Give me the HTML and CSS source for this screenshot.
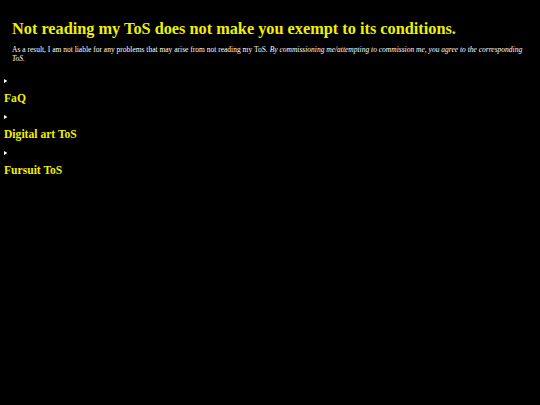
FILE: index.html
```html
<!DOCTYPE html>
<html>
<head>
<meta charset="utf-8">
<link rel="stylesheet" href="styles.css">
</head>
<body>
<div class="intro">
  <h2 class="title">Not reading my ToS does not make you exempt to its conditions.</h2>
  <p class="note">As a result, I am not liable for any problems that may arise from not reading my ToS. <em>By commissioning me/attempting to commission me, you agree to the corresponding ToS.</em></p>
</div>
<details class="section"><summary class="sum"><h3 class="head">FaQ</h3></summary></details>
<details class="section"><summary class="sum"><h3 class="head">Digital art ToS</h3></summary></details>
<details class="section"><summary class="sum"><h3 class="head">Fursuit ToS</h3></summary></details>
</body>
</html>
```

FILE: styles.css
```css
html, body { background: #000; }
body {
  margin: 4px;
  font-family: "Liberation Serif", "Times New Roman", serif;
  color: #fff;
}
.intro { padding: 8px 8px 0 8px; }
.title {
  margin: 7px 0 6px;
  font-size: 16.3px;
  line-height: 20px;
  font-weight: bold;
  color: #f0f000;
}
.note {
  margin: 0 0 14px;
  font-size: 7.5px;
  line-height: 9px;
  color: #fff;
}
.section { margin: 0; }
.sum {
  font-size: 6px;
  line-height: 8px;
  color: #fff;
  cursor: pointer;
}
.head {
  margin: 7px 0 7px;
  font-size: 11.6px;
  line-height: 14px;
  color: #f0f000;
}
```
